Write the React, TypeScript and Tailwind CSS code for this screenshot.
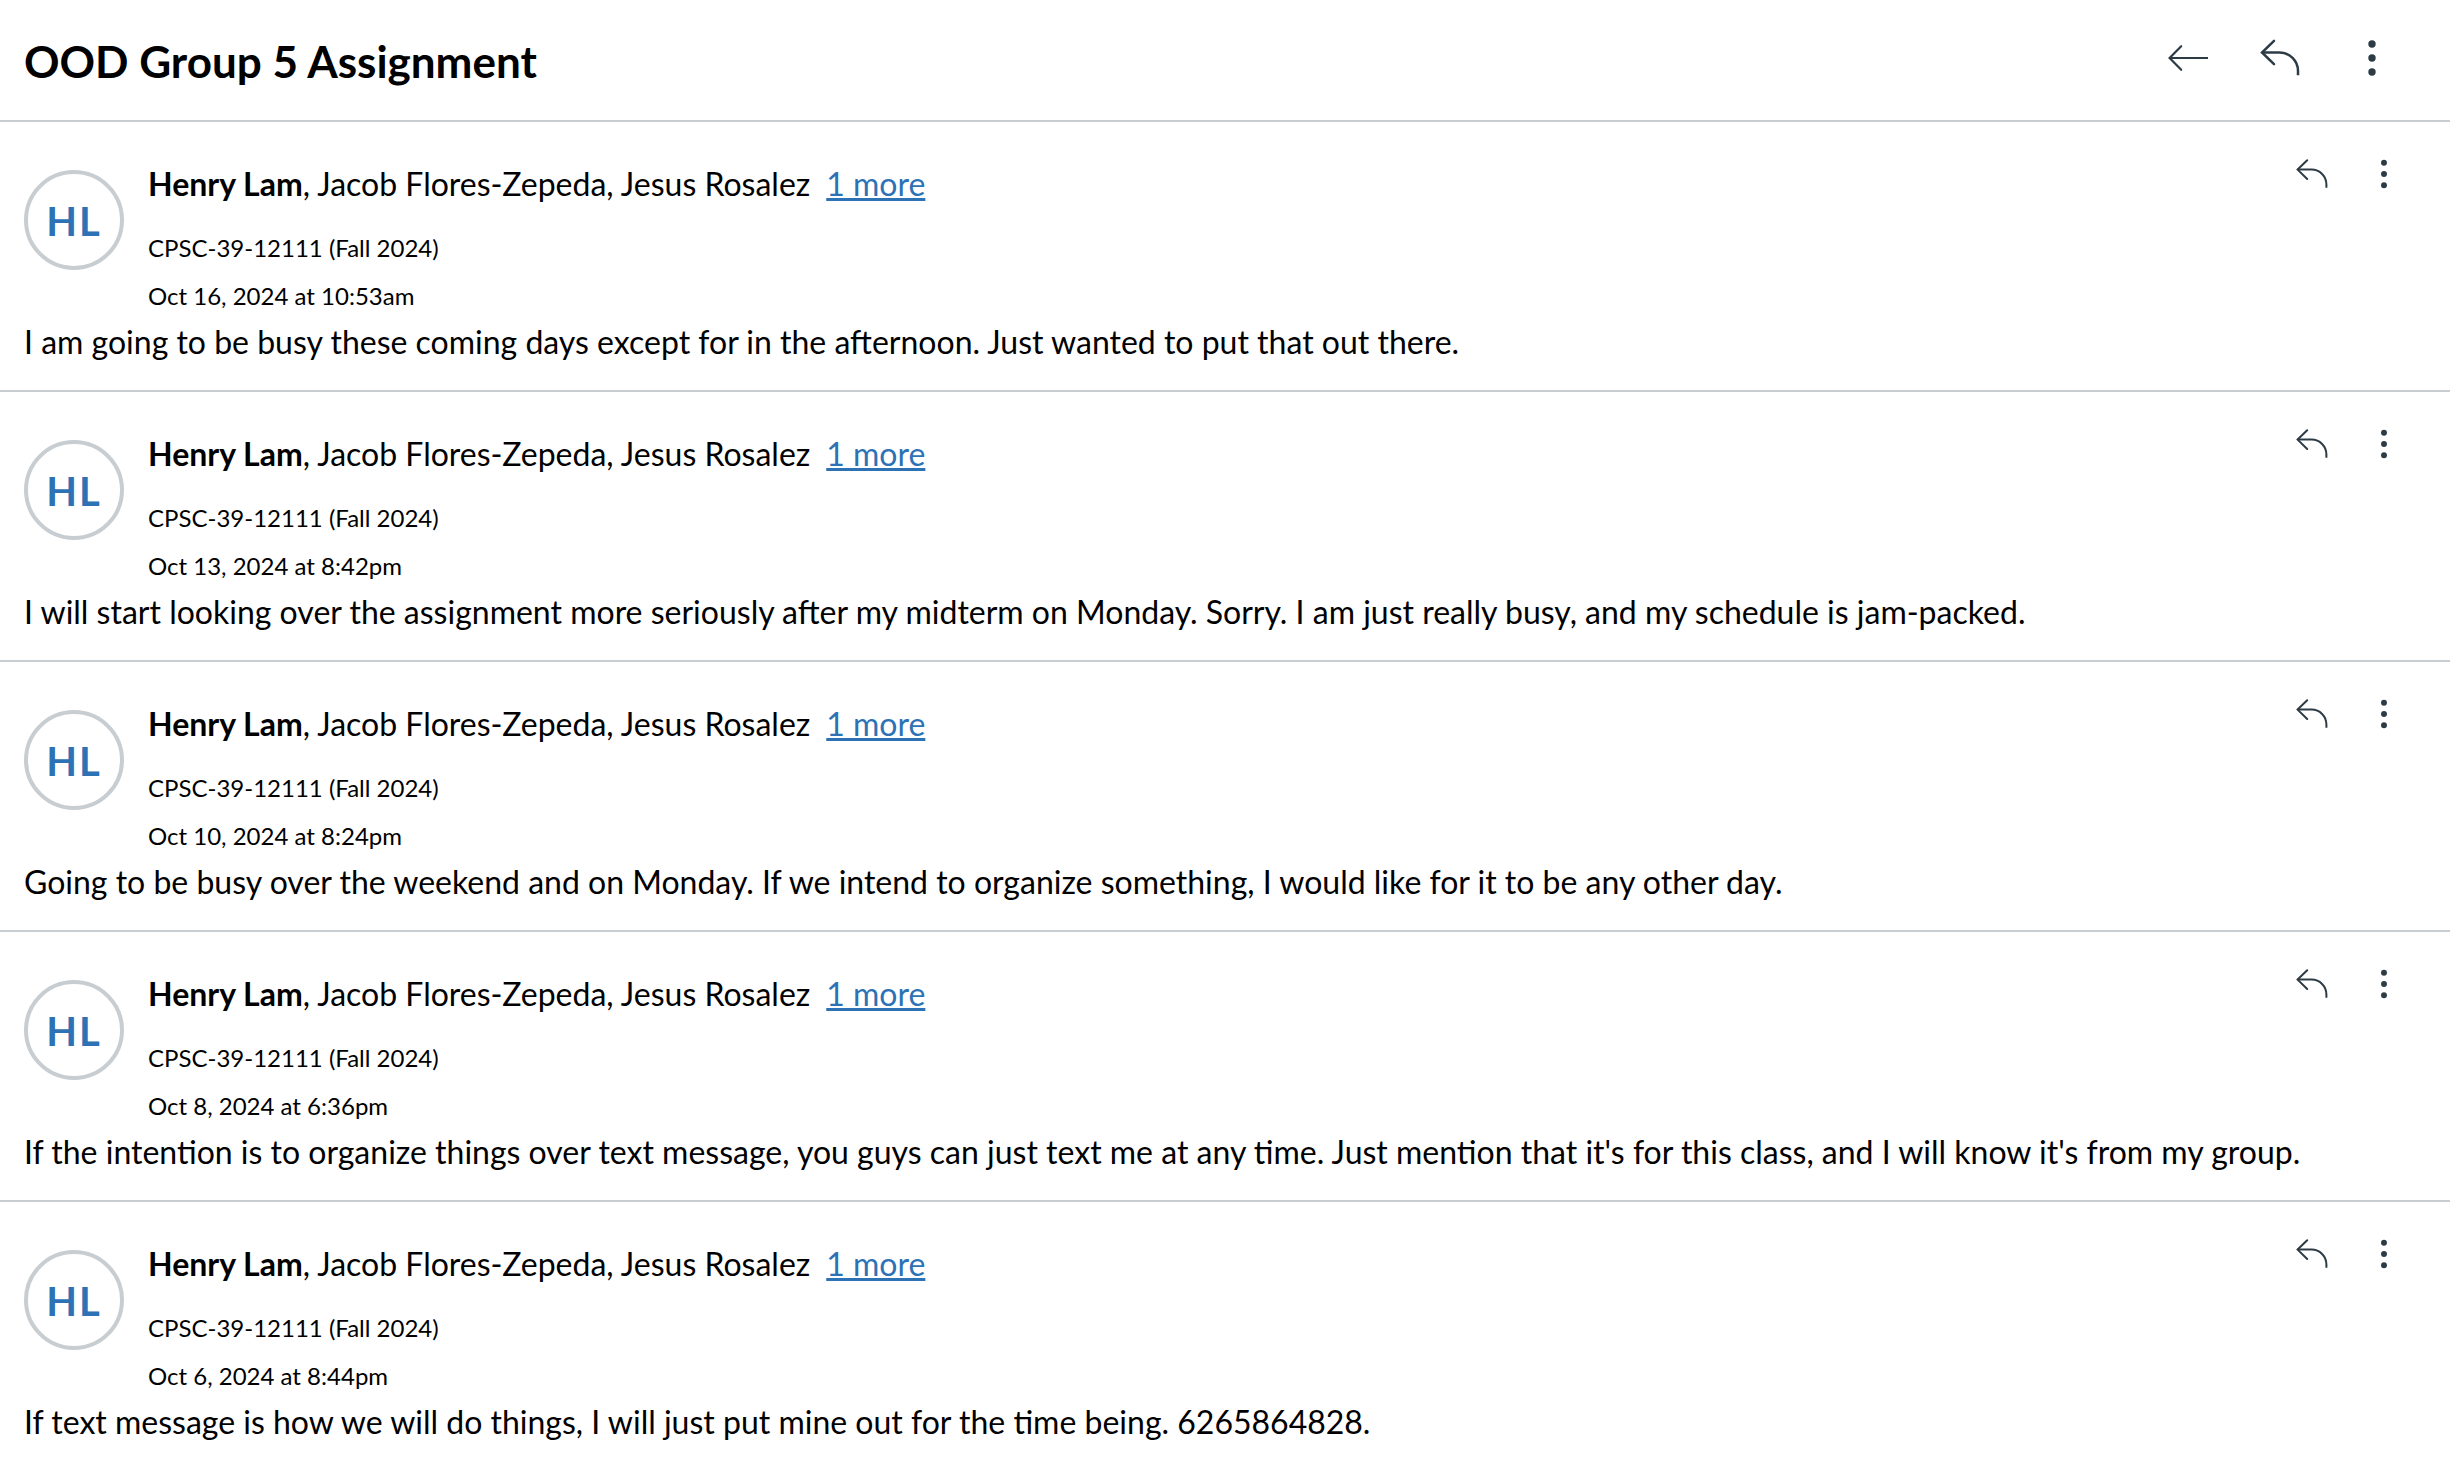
type Message = { id: number; date: string; body: string };

const messages: Message[] = [
  { id: 1, date: "Oct 16, 2024 at 10:53am", body: "I am going to be busy these coming days except for in the afternoon. Just wanted to put that out there." },
  { id: 2, date: "Oct 13, 2024 at 8:42pm", body: "I will start looking over the assignment more seriously after my midterm on Monday. Sorry. I am just really busy, and my schedule is jam-packed." },
  { id: 3, date: "Oct 10, 2024 at 8:24pm", body: "Going to be busy over the weekend and on Monday. If we intend to organize something, I would like for it to be any other day." },
  { id: 4, date: "Oct 8, 2024 at 6:36pm", body: "If the intention is to organize things over text message, you guys can just text me at any time. Just mention that it's for this class, and I will know it's from my group." },
  { id: 5, date: "Oct 6, 2024 at 8:44pm", body: "If text message is how we will do things, I will just put mine out for the time being. 6265864828." },
];

function BackIcon() {
  return (
    <svg viewBox="0 0 40 40" className="size-10" fill="none" stroke="currentColor" strokeWidth="2.2" aria-hidden="true">
      <path d="M40 20H1.6" />
      <path d="M13.2 8.2 1.6 20l11.6 11.8" strokeLinecap="round" />
    </svg>
  );
}

function ReplyIcon({ className }: { className: string }) {
  return (
    <svg viewBox="0 0 40 40" className={className} fill="none" stroke="currentColor" strokeWidth="2.5" aria-hidden="true">
      <path d="M14 2.8 2 14.5l12 11.7" strokeLinecap="round" />
      <path d="M2 14.5h17.5A18.5 18.5 0 0 1 38 33v4.2" />
    </svg>
  );
}

function MoreIcon({ className }: { className: string }) {
  return (
    <svg viewBox="0 0 40 40" className={className} fill="currentColor" aria-hidden="true">
      <circle cx="20" cy="6" r="3.7" />
      <circle cx="20" cy="20" r="3.7" />
      <circle cx="20" cy="34" r="3.7" />
    </svg>
  );
}

function MessageItem({ message }: { message: Message }) {
  return (
    <article className="border-t-2 border-[#c7cdd1] px-6 pb-6">
      <div className="flex items-start">
        <div className="mt-12 flex size-[100px] shrink-0 items-center justify-center rounded-full border-4 border-[#c7cdd1] pt-0.5 text-[40px] leading-none font-bold tracking-[2px] text-[#2d72b5]">
          HL
        </div>
        <div className="ml-6 min-w-0 flex-1 pt-[38px]">
          <p className="text-[32px] leading-[48px]">
            <span className="font-bold">Henry Lam</span>, Jacob Flores-Zepeda, Jesus Rosalez
            <a href="#participants" className="ml-4 text-[#2d72b5] underline decoration-[3px]">1 more</a>
          </p>
          <p className="mt-[22px] text-2xl leading-9">CPSC-39-12111 (Fall 2024)</p>
          <p className="mt-3 text-2xl leading-9">{message.date}</p>
        </div>
        <div className="mt-9 mr-[26px] flex gap-10 text-[#2d3b45]">
          <button type="button" aria-label="Reply"><ReplyIcon className="size-8" /></button>
          <button type="button" aria-label="More options"><MoreIcon className="size-8" /></button>
        </div>
      </div>
      <p className="mt-1 text-[32px] leading-[48px]">{message.body}</p>
    </article>
  );
}

export default function App() {
  return (
    <main className="min-h-screen bg-white font-['Lato',sans-serif] text-black">
      <header className="flex items-start justify-between px-6 pt-7 pb-[26px]">
        <h1 className="text-[44px] leading-[66px] font-bold">OOD Group 5 Assignment</h1>
        <div className="mt-2.5 mr-[34px] flex gap-[52px] text-[#2d3b45]">
          <button type="button" aria-label="Back"><BackIcon /></button>
          <button type="button" aria-label="Reply all"><ReplyIcon className="size-10" /></button>
          <button type="button" aria-label="More options"><MoreIcon className="size-10" /></button>
        </div>
      </header>
      {messages.map((m) => (
        <MessageItem key={m.id} message={m} />
      ))}
    </main>
  );
}
